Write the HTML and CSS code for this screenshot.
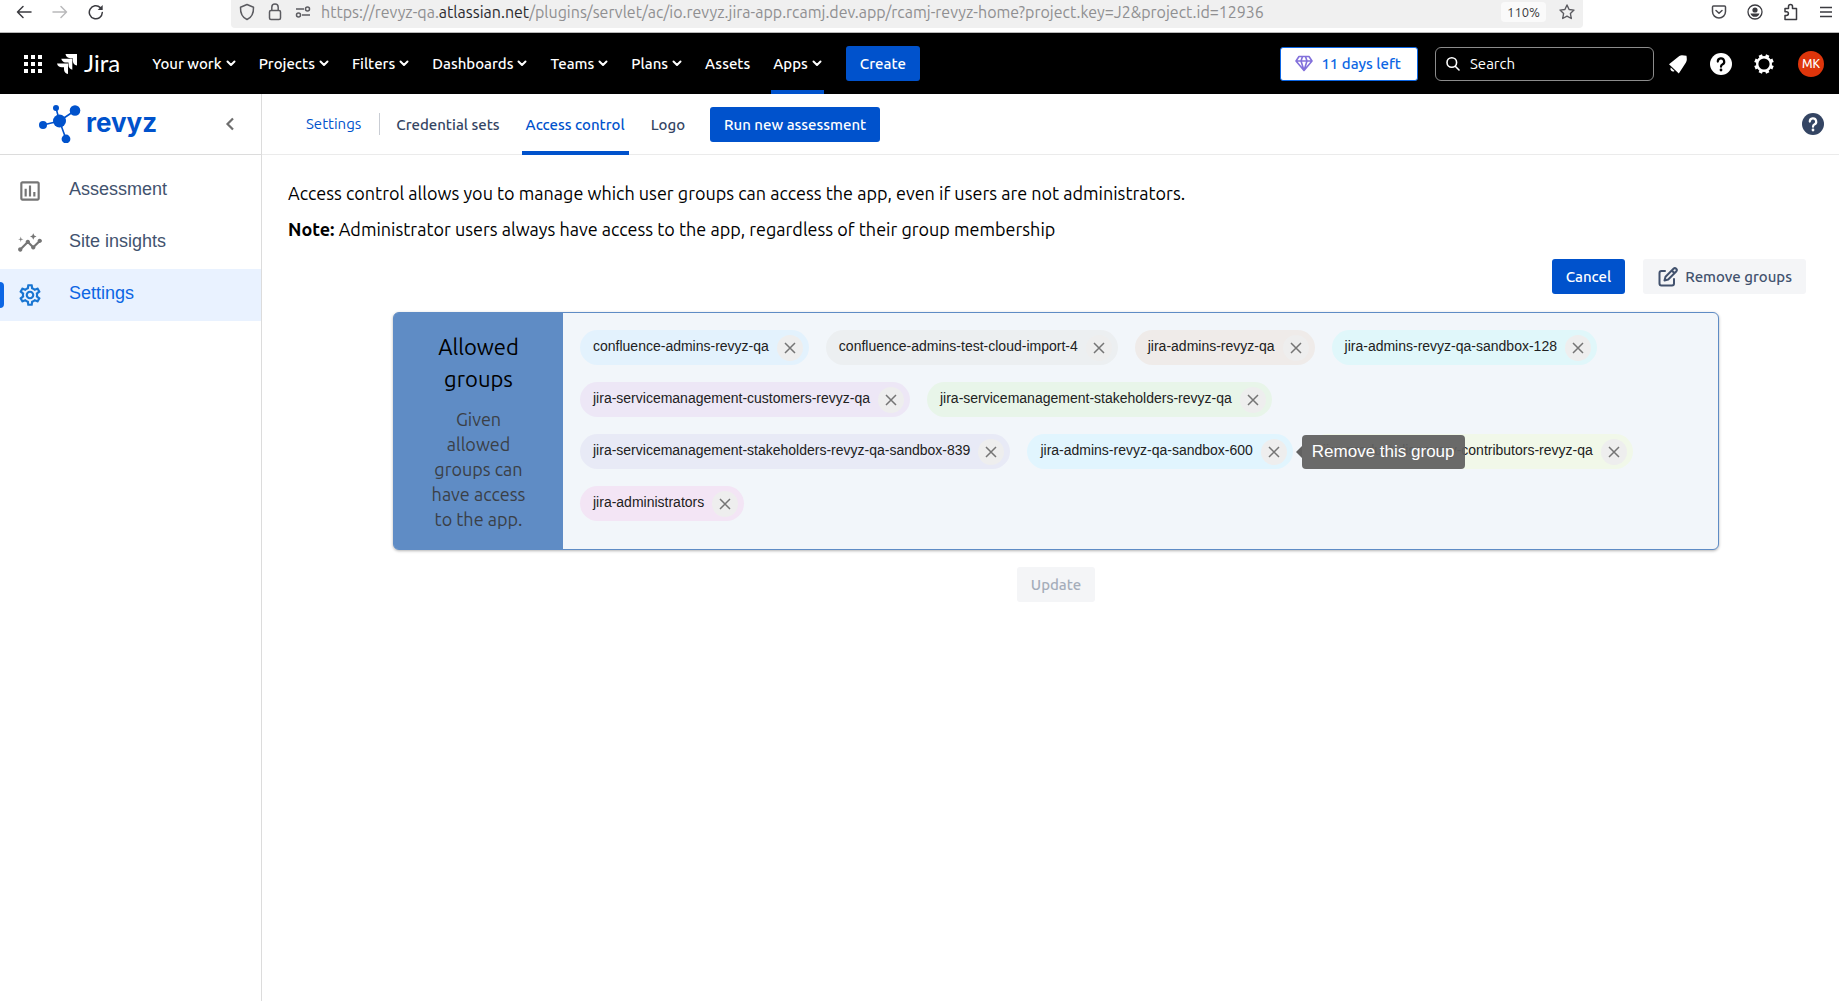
FILE: index.html
```html
<!DOCTYPE html>
<html lang="en">
<head>
<meta charset="utf-8">
<title>Access control - Revyz</title>
<link rel="stylesheet" href="styles.css">
</head>
<body>
<div class="browser">
  <div class="browser-nav">
    <button class="icon-btn" aria-label="Back"><svg width="16" height="16" viewBox="0 0 16 16" fill="none" stroke="#3b3b40" stroke-width="1.5" stroke-linecap="round" stroke-linejoin="round"><path d="M15 8H1.500M7 2.500L1.500 8L7 13.500"/></svg></button>
    <button class="icon-btn" aria-label="Forward" disabled><svg width="16" height="16" viewBox="0 0 16 16" fill="none" stroke="#b9b9bb" stroke-width="1.500" stroke-linecap="round" stroke-linejoin="round"><path d="M1 8H14.500M9 2.500L14.500 8L9 13.500"/></svg></button>
    <button class="icon-btn" aria-label="Reload"><svg width="16" height="16" viewBox="0 0 16 16" fill="none" stroke="#3b3b40" stroke-width="1.500" stroke-linecap="round"><path d="M14.300 8.500A6.500 6.500 0 1 1 12.300 3.600"/><path d="M14.700 1v5h-5z" fill="#3b3b40" stroke="none"/></svg></button>
  </div>
  <div class="url-bar">
    <svg width="16" height="18" viewBox="0 0 16 18" fill="none" stroke="#5b5b60" stroke-width="1.500" stroke-linejoin="round"><path d="M8 1.500L14.500 4.200C14.700 9.500 12.500 14.500 8 16.500C3.500 14.500 1.300 9.500 1.500 4.200Z"/></svg>
    <svg width="14" height="18" viewBox="0 0 14 18" fill="none" stroke="#5b5b60" stroke-width="1.500"><rect x="1.500" y="7.500" width="11" height="9" rx="1.500"/><path d="M3.800 7.500V4.200a3.200 3.200 0 0 1 6.400 0V7.500"/></svg>
    <svg width="16" height="14" viewBox="0 0 16 14" fill="none" stroke="#5b5b60" stroke-width="1.500"><path d="M1 4H9M7 10H15"/><circle cx="12.500" cy="4" r="2"/><circle cx="3.500" cy="10" r="2"/></svg>
    <span class="url">https://revyz-qa.<b>atlassian.net</b>/plugins/servlet/ac/io.revyz.jira-app.rcamj.dev.app/rcamj-revyz-home?project.key=J2&amp;project.id=12936</span>
    <span class="zoom">110%</span>
    <svg width="16" height="16" viewBox="0 0 16 16" fill="none" stroke="#5b5b60" stroke-width="1.400" stroke-linejoin="round"><path d="M8 1L10.100 5.500L15 6.100L11.400 9.500L12.300 14.500L8 12.100L3.700 14.500L4.600 9.500L1 6.100L5.900 5.500Z"/></svg>
  </div>
  <div class="browser-tools">
    <button class="icon-btn" aria-label="Pocket"><svg width="16" height="16" viewBox="0 0 16 16" fill="none" stroke="#4a4a4f" stroke-width="1.500" stroke-linecap="round" stroke-linejoin="round"><path d="M2.500 2H13.500Q14.500 2 14.500 3V7.500A6.500 6.500 0 0 1 1.500 7.500V3Q1.500 2 2.500 2ZM5 6.500L8 9.300L11 6.500"/></svg></button>
    <button class="icon-btn" aria-label="Account"><svg width="16" height="16" viewBox="0 0 16 16" fill="#3b3b40"><circle cx="8" cy="8" r="7" fill="none" stroke="#3b3b40" stroke-width="1.300"/><circle cx="8" cy="6" r="2.600"/><path d="M3.500 9.500H12.500A4.700 4.700 0 0 1 3.500 9.500Z"/></svg></button>
    <button class="icon-btn" aria-label="Extensions"><svg width="16" height="18" viewBox="0 0 16 18" fill="none" stroke="#3b3b40" stroke-width="1.500" stroke-linejoin="round"><path d="M2 16.500V12.500H3.500A1.900 1.900 0 0 0 3.500 8.700H2V5.500H5.500V3.500A2 2 0 0 1 9.500 3.500V5.500H13.500V16.500Z"/></svg></button>
    <button class="icon-btn" aria-label="Menu"><svg width="14" height="14" viewBox="0 0 14 14" stroke="#3b3b40" stroke-width="1.500"><path d="M1 2.500H13M1 7H13M1 11.500H13"/></svg></button>
  </div>
</div>

<header class="topbar">
  <button class="icon-btn apps" aria-label="Switch apps"><svg width="18" height="18" viewBox="0 0 18 18" fill="#fff"><path d="M0 0h4v4H0zM7 0h4v4H7zM14 0h4v4h-4zM0 7h4v4H0zM7 7h4v4H7zM14 7h4v4h-4zM0 14h4v4H0zM7 14h4v4H7zM14 14h4v4h-4z"/></svg></button>
  <a class="jira" href="#"><svg width="20" height="20" viewBox="0 0 20 20" fill="#fff"><path d="M8.500 0H20V11.500A5 5 0 0 1 15.800 6.800V4.200H13.200A5 5 0 0 1 8.500 0ZM4.300 4.700H15.300V15.700A5 5 0 0 1 11.500 11V8.500H8.500A5 5 0 0 1 4.300 4.700ZM0 9.500H11V20A5 5 0 0 1 7 15.500V13.300H4.800A5 5 0 0 1 0 9.500Z"/></svg><span>Jira</span></a>
  <nav class="menu">
    <button>Your work<svg class="chev" viewBox="0 0 10 7"><path d="M1.500 1.500L5 5L8.500 1.500"/></svg></button>
    <button>Projects<svg class="chev" viewBox="0 0 10 7"><path d="M1.500 1.500L5 5L8.500 1.500"/></svg></button>
    <button>Filters<svg class="chev" viewBox="0 0 10 7"><path d="M1.500 1.500L5 5L8.500 1.500"/></svg></button>
    <button>Dashboards<svg class="chev" viewBox="0 0 10 7"><path d="M1.500 1.500L5 5L8.500 1.500"/></svg></button>
    <button>Teams<svg class="chev" viewBox="0 0 10 7"><path d="M1.500 1.500L5 5L8.500 1.500"/></svg></button>
    <button>Plans<svg class="chev" viewBox="0 0 10 7"><path d="M1.500 1.500L5 5L8.500 1.500"/></svg></button>
    <button>Assets</button>
    <button class="current">Apps<svg class="chev" viewBox="0 0 10 7"><path d="M1.500 1.500L5 5L8.500 1.500"/></svg></button>
  </nav>
  <button class="btn primary">Create</button>
  <div class="tools">
    <button class="trial"><svg width="18" height="17" viewBox="0 0 18 17" fill="none" stroke="#8270db" stroke-width="1.600" stroke-linejoin="round"><path d="M4 1.500H14L17 6L9 15.500L1 6ZM1 6H17M6 6L9 15.500L12 6L10.500 1.500M7.500 1.500L6 6"/></svg>11 days left</button>
    <label class="search"><svg width="16" height="16" viewBox="0 0 16 16" fill="none" stroke="#fff" stroke-width="1.600" stroke-linecap="round"><circle cx="6.800" cy="6.500" r="4.800"/><path d="M10.500 10.500L14 14"/></svg><input type="text" placeholder="Search" aria-label="Search"></label>
    <button class="icon-btn" aria-label="Notifications"><svg width="22" height="22" viewBox="0 0 22 22" fill="#fff"><path d="M2 11.200L12.300 3C14.500 1.700 17 2.700 19.500 2.800C19.800 5.500 20.300 7.500 18.800 9.700L11.800 20.500Z"/><path d="M3.800 14.500L7.500 18A2.600 2.600 0 0 1 3.800 14.500Z"/></svg></button>
    <button class="icon-btn" aria-label="Help"><svg width="22" height="22" viewBox="0 0 22 22"><circle cx="11" cy="11" r="11" fill="#fff"/><path d="M7.800 8.600A3.200 3.200 0 1 1 12.300 11.500Q11 12.100 11 13.700" fill="none" stroke="#000" stroke-width="2.200" stroke-linecap="round"/><circle cx="11" cy="17" r="1.400"/></svg></button>
    <button class="icon-btn" aria-label="Settings"><svg width="22" height="22" viewBox="0 0 22 22"><circle cx="11" cy="11" r="6.800" fill="none" stroke="#fff" stroke-width="2.400"/><g fill="none" stroke="#fff" stroke-width="3.600"><path d="M11 1.200V4M11 18V20.800M1.200 11H4M18 11H20.800" transform="rotate(22.500 11 11)"/><path d="M11 1.200V4M11 18V20.800M1.200 11H4M18 11H20.800" transform="rotate(67.500 11 11)"/></g></svg></button>
    <button class="avatar">MK</button>
  </div>
</header>

<div class="app">
  <aside class="sidebar">
    <div class="brand">
      <a class="revyz" href="#"><svg width="42" height="38" viewBox="0 0 42 38" fill="#0052cc" stroke="#0052cc"><path d="M20.500 16L17 3M20.500 16L36 5.500M20.500 16L4 20M20.500 16L27 34" fill="none" stroke-width="1.600"/><g stroke="none"><circle cx="20.500" cy="16" r="6.500"/><circle cx="17" cy="3" r="3"/><circle cx="36" cy="5.500" r="5.300"/><circle cx="4" cy="20" r="4"/><circle cx="27" cy="34" r="4.400"/></g></svg><span>revyz</span></a>
      <button class="icon-btn" aria-label="Collapse"><svg width="10" height="14" viewBox="0 0 10 14" fill="none" stroke="#6e6e6e" stroke-width="2.200"><path d="M8 1.500L2.500 7L8 12.500"/></svg></button>
    </div>
    <nav class="side-nav">
      <a href="#"><svg width="26" height="26" viewBox="0 0 24 24" fill="#757575"><path d="M19 3H5c-1.100 0-2 .9-2 2v14c0 1.100.9 2 2 2h14c1.100 0 2-.9 2-2V5c0-1.100-.9-2-2-2zm0 16H5V5h14v14zM7 10h2v7H7zM11 7h2v10h-2zM15 13h2v4h-2z"/></svg><span>Assessment</span></a>
      <a href="#"><svg width="26" height="26" viewBox="0 0 24 24" fill="#757575"><path d="M21 8c-1.450 0-2.260 1.440-1.930 2.510l-3.550 3.560c-.3-.09-.74-.09-1.040 0l-2.550-2.550C12.270 10.450 11.460 9 10 9c-1.450 0-2.270 1.440-1.930 2.520l-4.560 4.550C2.440 15.740 1 16.550 1 18c0 1.100.9 2 2 2 1.450 0 2.260-1.440 1.930-2.510l4.550-4.560c.3.090.74.090 1.040 0l2.550 2.550C12.730 16.550 13.540 18 15 18c1.450 0 2.270-1.440 1.930-2.520l3.560-3.550C21.560 12.260 23 11.450 23 10c0-1.100-.9-2-2-2z"/><path d="M15 9l.94-2.070L18 6l-2.060-.93L15 3l-.92 2.070L12 6l2.080.93zM3.500 11L4 9l2-.5L4 8l-.5-2L3 8l-2 .5L3 9z"/></svg><span>Site insights</span></a>
      <a href="#" class="current"><svg width="26" height="26" viewBox="0 0 24 24" fill="#1976d2"><path d="M19.430 12.980c.04-.32.070-.64.070-.98s-.03-.66-.07-.98l2.110-1.650c.19-.15.24-.42.12-.64l-2-3.460c-.09-.16-.26-.25-.44-.25-.06 0-.12.010-.17.030l-2.490 1c-.52-.4-1.080-.73-1.690-.98l-.38-2.650C14.460 2.180 14.250 2 14 2h-4c-.25 0-.46.18-.49.42l-.38 2.650c-.61.25-1.170.59-1.690.98l-2.490-1c-.06-.02-.12-.03-.18-.03-.17 0-.34.09-.43.25l-2 3.460c-.13.22-.07.49.12.64l2.110 1.650c-.04.32-.07.65-.07.98s.03.66.07.98l-2.110 1.650c-.19.15-.24.42-.12.64l2 3.460c.09.16.26.25.44.25.06 0 .12-.01.17-.03l2.490-1c.52.4 1.080.73 1.690.98l.38 2.650c.03.24.24.42.49.42h4c.25 0 .46-.18.49-.42l.38-2.650c.61-.25 1.170-.59 1.690-.98l2.490 1c.06.020.12.030.18.030.17 0 .34-.09.43-.25l2-3.460c.12-.22.070-.49-.12-.64l-2.110-1.650zm-1.980-1.710c.04.31.050.52.050.73 0 .21-.02.43-.05.73l-.14 1.130.89.7 1.080.84-.7 1.210-1.270-.51-1.040-.42-.9.68c-.43.32-.84.56-1.250.73l-1.060.43-.16 1.130-.2 1.350h-1.400l-.19-1.350-.16-1.130-1.060-.43c-.43-.18-.83-.41-1.230-.71l-.91-.7-1.060.43-1.270.51-.7-1.210 1.080-.84.89-.7-.14-1.130c-.03-.31-.05-.54-.05-.74s.02-.43.05-.73l.14-1.130-.89-.7-1.080-.84.7-1.210 1.270.51 1.040.42.9-.68c.43-.32.84-.56 1.250-.73l1.060-.43.16-1.130.2-1.350h1.390l.19 1.350.16 1.130 1.060.43c.43.18.83.41 1.230.71l.91.7 1.060-.43 1.270-.51.7 1.210-1.070.85-.89.7.14 1.130zM12 8c-2.210 0-4 1.790-4 4s1.790 4 4 4 4-1.790 4-4-1.790-4-4-4zm0 6c-1.100 0-2-.9-2-2s.9-2 2-2 2 .9 2 2-.9 2-2 2z"/></svg><span>Settings</span></a>
    </nav>
  </aside>

  <main>
    <div class="tabs">
      <span class="section-name">Settings</span>
      <nav class="tab-list">
        <a href="#">Credential sets</a>
        <a href="#" class="current">Access control</a>
        <a href="#">Logo</a>
      </nav>
      <button class="btn primary">Run new assessment</button>
      <button class="icon-btn help" aria-label="Help"><svg width="22" height="22" viewBox="0 0 22 22"><circle cx="11" cy="11" r="11" fill="#344563"/><path d="M7.800 8.600A3.200 3.200 0 1 1 12.300 11.500Q11 12.100 11 13.700" fill="none" stroke="#fff" stroke-width="2.200" stroke-linecap="round"/><circle cx="11" cy="17" r="1.400" fill="#fff"/></svg></button>
    </div>

    <div class="content">
      <p>Access control allows you to manage which user groups can access the app, even if users are not administrators.</p>
      <p><b>Note:</b> Administrator users always have access to the app, regardless of their group membership</p>

      <div class="actions">
        <button class="btn primary">Cancel</button>
        <button class="btn subtle"><svg width="22" height="22" viewBox="0 0 22 22" fill="none" stroke="#42526e" stroke-width="2" stroke-linecap="round" stroke-linejoin="round"><path d="M8 5H4.500Q2.500 5 2.500 7V17.500Q2.500 19.500 4.500 19.500H15Q17 19.500 17 17.500V13"/><path d="M7.500 14.500L8.500 10.800L16.500 2.800A1.800 1.800 0 0 1 19.200 5.500L11.200 13.500ZM14.800 4.500L17.500 7.200"/></svg>Remove groups</button>
      </div>

      <section class="card">
        <div class="card-side">
          <h2>Allowed groups</h2>
          <p>Given allowed groups can have access to the app.</p>
        </div>
        <ul class="chips">
          <li class="chip blue"><span>confluence-admins-revyz-qa</span><button aria-label="Remove"><svg viewBox="0 0 12 12"><path d="M1 1L11 11M11 1L1 11"/></svg></button></li>
          <li class="chip grey"><span>confluence-admins-test-cloud-import-4</span><button aria-label="Remove"><svg viewBox="0 0 12 12"><path d="M1 1L11 11M11 1L1 11"/></svg></button></li>
          <li class="chip brown"><span>jira-admins-revyz-qa</span><button aria-label="Remove"><svg viewBox="0 0 12 12"><path d="M1 1L11 11M11 1L1 11"/></svg></button></li>
          <li class="chip cyan"><span>jira-admins-revyz-qa-sandbox-128</span><button aria-label="Remove"><svg viewBox="0 0 12 12"><path d="M1 1L11 11M11 1L1 11"/></svg></button></li>
          <li class="chip violet"><span>jira-servicemanagement-customers-revyz-qa</span><button aria-label="Remove"><svg viewBox="0 0 12 12"><path d="M1 1L11 11M11 1L1 11"/></svg></button></li>
          <li class="chip green"><span>jira-servicemanagement-stakeholders-revyz-qa</span><button aria-label="Remove"><svg viewBox="0 0 12 12"><path d="M1 1L11 11M11 1L1 11"/></svg></button></li>
          <li class="chip indigo"><span>jira-servicemanagement-stakeholders-revyz-qa-sandbox-839</span><button aria-label="Remove"><svg viewBox="0 0 12 12"><path d="M1 1L11 11M11 1L1 11"/></svg></button></li>
          <li class="chip sky"><span>jira-admins-revyz-qa-sandbox-600</span><button aria-label="Remove" aria-describedby="tip"><svg viewBox="0 0 12 12"><path d="M1 1L11 11M11 1L1 11"/></svg></button><div class="tooltip" id="tip" role="tooltip">Remove this group</div></li>
          <li class="chip lime"><span>jira-product-discovery-contributors-revyz-qa</span><button aria-label="Remove"><svg viewBox="0 0 12 12"><path d="M1 1L11 11M11 1L1 11"/></svg></button></li>
          <li class="chip pink"><span>jira-administrators</span><button aria-label="Remove"><svg viewBox="0 0 12 12"><path d="M1 1L11 11M11 1L1 11"/></svg></button></li>
        </ul>
      </section>

      <div class="submit"><button class="btn subtle" disabled>Update</button></div>
    </div>
  </main>
</div>
</body>
</html>
```
FILE: styles.css
```css
* { box-sizing: border-box; }

body {
  margin: 0;
  min-height: 100vh;
  display: flex;
  flex-direction: column;
  background: #fff;
  color: #000;
  font-family: Ubuntu, "Noto Sans", sans-serif;
  font-size: 18px;
}

button {
  padding: 0;
  border: 0;
  background: none;
  font: inherit;
  color: inherit;
}

a { color: inherit; text-decoration: none; }
svg { display: block; flex: none; }

.icon-btn { display: flex; }

/* Browser toolbar */
.browser {
  display: flex;
  height: 33px;
  border-bottom: 1px solid #b8b8b8;
}

.browser-nav {
  display: flex;
  align-items: center;
  gap: 20px;
  width: 231px;
  height: 24px;
  padding-left: 16px;
}

.url-bar {
  flex: 1;
  display: flex;
  align-items: center;
  gap: 13px;
  height: 28px;
  padding: 0 8px 4px;
  border-radius: 0 0 4px 4px;
  background: #f0f0f0;
}

.url {
  flex: 1;
  margin-left: -3px;
  font-size: 16px;
  line-height: 24px;
  color: #8f8f91;
  white-space: nowrap;
}

.url b { font-weight: 400; color: #2a2a2e; }

.zoom {
  padding: 0 6px;
  border-radius: 4px;
  background: #fafafa;
  font-size: 13px;
  line-height: 20px;
  color: #3b3b40;
}

.browser-tools {
  display: flex;
  align-items: center;
  justify-content: flex-end;
  gap: 20px;
  width: 256px;
  height: 24px;
  padding-right: 6px;
}

/* Jira navigation */
.topbar {
  display: flex;
  align-items: center;
  height: 61px;
  padding: 0 15px 0 24px;
  background: #000;
  color: #fff;
}

.jira {
  display: flex;
  align-items: center;
  gap: 7px;
  margin-left: 15px;
  font-family: Lato, sans-serif;
  font-size: 24px;
  line-height: 28px;
}

.jira span { padding-bottom: 2px; }

.menu {
  display: flex;
  align-self: stretch;
  gap: 19px;
  margin: 0 22px 0 30px;
  font-size: 15px;
  font-weight: 500;
}

.menu button {
  display: flex;
  align-items: center;
  gap: 4px;
  padding: 4px 2px 0;
  border-bottom: 4px solid transparent;
}

.menu .current { border-bottom-color: #0052cc; }

.chev {
  width: 10px;
  height: 7px;
  fill: none;
  stroke: #fff;
  stroke-width: 2;
  stroke-linecap: round;
  stroke-linejoin: round;
}

.btn {
  display: flex;
  align-items: center;
  gap: 6px;
  height: 35px;
  padding: 0 14px;
  border-radius: 3px;
  font-size: 15px;
  font-weight: 500;
}

.primary { background: #0052cc; color: #fff; }
.subtle { background: #f4f5f7; color: #42526e; }
.subtle:disabled { color: #a5adba; }

.tools {
  display: flex;
  align-items: center;
  gap: 21px;
  margin-left: auto;
}

.trial {
  display: flex;
  align-items: center;
  gap: 8px;
  height: 34px;
  padding: 0 16px 0 14px;
  margin-right: -4px;
  border: 1px solid #0c66e4;
  border-radius: 3px;
  background: #fff;
  color: #0c66e4;
  font-size: 15px;
  font-weight: 500;
}

.search {
  display: flex;
  align-items: center;
  gap: 9px;
  width: 219px;
  height: 34px;
  padding: 0 9px;
  margin-right: -8px;
  border: 1px solid #8c8c8c;
  border-radius: 6px;
}

.search input {
  width: 100%;
  min-width: 0;
  padding: 0;
  border: 0;
  outline: 0;
  background: none;
  color: #fff;
  font: inherit;
  font-size: 15px;
}

.search input::placeholder { color: #fff; opacity: 1; }

.avatar {
  width: 26px;
  height: 26px;
  margin-left: 2px;
  border-radius: 50%;
  background: #de350b;
  font-size: 12px;
  font-weight: 500;
}

/* App frame */
.app { flex: 1; display: flex; }

.sidebar {
  flex: none;
  width: 262px;
  border-right: 1px solid #dcdcdc;
}

.brand {
  display: flex;
  align-items: center;
  justify-content: space-between;
  height: 61px;
  padding: 0 26px 0 39px;
  border-bottom: 1px solid #dcdcdc;
}

.revyz {
  display: flex;
  align-items: center;
  gap: 5px;
  color: #0052cc;
  font-family: Inter, sans-serif;
  font-size: 26px;
  font-weight: 700;
}

.revyz span { padding-bottom: 3px; }

.side-nav {
  padding-top: 10px;
  font-family: "Liberation Sans", sans-serif;
  font-size: 18px;
  color: #42526e;
}

.side-nav a {
  display: flex;
  align-items: center;
  gap: 26px;
  height: 52px;
  padding-left: 17px;
}

.side-nav span { padding-bottom: 4px; }

.side-nav .current {
  position: relative;
  background: #e9f2ff;
  color: #0c66e4;
}

.side-nav .current::before {
  content: "";
  position: absolute;
  left: 0;
  top: 13px;
  width: 4px;
  height: 26px;
  border-radius: 0 4px 4px 0;
  background: #0c66e4;
}

main { flex: 1; min-width: 0; }

.tabs {
  display: flex;
  align-items: center;
  height: 61px;
  padding: 0 15px 0 44px;
  border-bottom: 1px solid #ebebeb;
  font-size: 15px;
}

.section-name {
  padding-right: 18px;
  border-right: 1px solid #c9cdd4;
  line-height: 22px;
  color: #0052cc;
}

.tab-list {
  display: flex;
  align-self: stretch;
  gap: 18px;
  margin: 0 21px 0 12px;
  font-weight: 500;
  color: #344563;
}

.tab-list a {
  display: flex;
  align-items: center;
  padding: 4px 4px 0;
  margin-bottom: -1px;
  border-bottom: 4px solid transparent;
}

.tab-list .current { border-bottom-color: #0052cc; color: #0052cc; }
.help { margin-left: auto; }

.content { padding: 26px 15px 0 26px; }
.content > p { margin: 0 0 12px; line-height: 24px; }
.content b { font-weight: 700; }

.actions {
  display: flex;
  justify-content: flex-end;
  gap: 18px;
  margin: 18px 18px 18px 0;
}

.card {
  display: flex;
  margin: 0 105px;
  border: 1px solid #5f8cc5;
  border-radius: 6px;
  background: #f2f6fa;
  box-shadow: 0 1px 3px rgba(0, 0, 0, 0.3);
}

.card-side {
  flex: none;
  width: 169px;
  padding: 18px 32px 17px;
  border-radius: 4px 0 0 4px;
  background: #5f8cc5;
  text-align: center;
}

.card-side h2 {
  margin: 0 0 12px;
  font-size: 22px;
  font-weight: 400;
  line-height: 32px;
}

.card-side p { margin: 0; line-height: 25px; color: #3a3f47; }

.chips {
  flex: 1;
  display: flex;
  flex-wrap: wrap;
  align-content: flex-start;
  gap: 17px;
  margin: 0;
  padding: 17px;
  list-style: none;
}

.chip {
  position: relative;
  display: flex;
  align-items: center;
  gap: 8px;
  height: 35px;
  padding: 0 6px 0 13px;
  border-radius: 18px;
  font-family: "Liberation Sans", sans-serif;
  font-size: 14px;
  color: #212121;
}

.chip span { padding-bottom: 3px; }

.chip button {
  display: grid;
  place-items: center;
  width: 26px;
  height: 26px;
  border-radius: 50%;
  background: #eee;
}

.chip svg {
  width: 12px;
  height: 12px;
  stroke: #757575;
  stroke-width: 1.5;
}

.blue { background: #e3f2fd; }
.grey { background: #eceff1; }
.brown { background: #efebe9; }
.cyan { background: #e0f7fa; }
.violet { background: #ede7f6; }
.green { background: #e8f5e9; }
.indigo { background: #e8eaf6; }
.sky { background: #e1f5fe; }
.lime { background: #f1f8e9; }
.pink { background: #f3e5f5; }

.tooltip {
  position: absolute;
  z-index: 1;
  left: calc(100% + 9px);
  top: 1px;
  padding: 0 10px;
  border-radius: 4px;
  background: rgba(97, 97, 97, 0.94);
  color: #fff;
  font-size: 17px;
  line-height: 34px;
  white-space: nowrap;
}

.tooltip::before {
  content: "";
  position: absolute;
  right: 100%;
  top: 11px;
  border: 6px solid transparent;
  border-left: 0;
  border-right-color: #616161;
}

.submit {
  display: flex;
  justify-content: center;
  margin-top: 17px;
}
```
